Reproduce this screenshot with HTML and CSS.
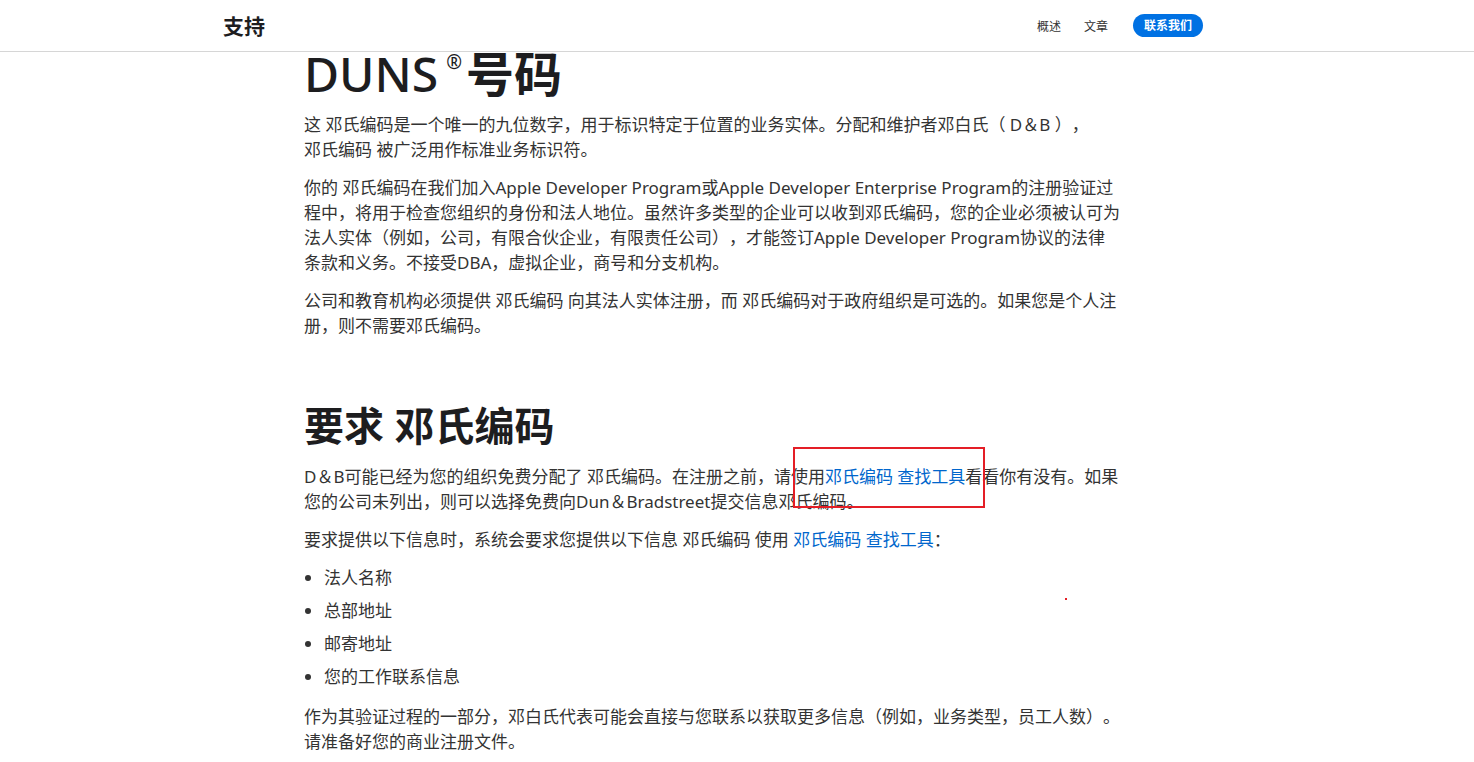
FILE: index.html
```html
<!DOCTYPE html>
<html lang="zh-CN">

<head>
    <meta charset="UTF-8">
    <meta name="viewport" content="width=device-width, initial-scale=1.0">
    <title>DUNS 号码 - 支持</title>
    <link rel="stylesheet" href="styles.css">
</head>

<body>
    <header class="topbar">
        <div class="topbar-inner">
            <h2 class="brand">支持</h2>
            <nav class="menu">
                <a href="#" class="menu-link">概述</a>
                <a href="#" class="menu-link">文章</a>
                <a href="#" class="contact-button">联系我们</a>
            </nav>
        </div>
    </header>

    <main class="page">
        <article class="content">
            <h1 class="title"><span class="title-latin">DUNS</span><sup class="reg">®</sup>号码</h1>
            <p>这 <span class="term">邓氏编码</span>是一个唯一的九位数字，用于标识特定于位置的业务实体。分配和维护者邓白氏（ D＆B ），<span class="term">邓氏编码</span> 被广泛用作标准业务标识符。</p>
            <p>你的 邓氏编码在我们加入Apple Developer Program或Apple Developer Enterprise Program的注册验证过程中，将用于检查您组织的身份和法人地位。虽然许多类型的企业可以收到邓氏编码，您的企业必须被认可为法人实体（例如，公司，有限合伙企业，有限责任公司），才能签订Apple Developer Program协议的法律条款和义务。不接受DBA，虚拟企业，商号和分支机构。</p>
            <p>公司和教育机构必须提供 <span class="term">邓氏编码</span> 向其法人实体注册，而 邓氏编码对于政府组织是可选的。如果您是个人注册，则不需要邓氏编码。</p>

            <h2 class="section-title">要求 邓氏编码</h2>
            <p>D＆B可能已经为您的组织免费分配了 邓氏编码。在注册之前，请<span class="marked">使用<a href="#" class="link">邓氏编码 查找工具</a>看</span>看你有没有。如果您的公司未列出，则可以选择免费向Dun＆Bradstreet提交信息邓氏编码。</p>
            <p>要求提供以下信息时，系统会要求您提供以下信息 邓氏编码 使用 <a href="#" class="link">邓氏编码 查找工具</a>：</p>
            <ul class="info-list">
                <li>法人名称</li>
                <li>总部地址</li>
                <li>邮寄地址</li>
                <li>您的工作联系信息</li>
            </ul>
            <p>作为其验证过程的一部分，邓白氏代表可能会直接与您联系以获取更多信息（例如，业务类型，员工人数）。请准备好您的商业注册文件。</p>
            <span class="dot"></span>
        </article>
    </main>
</body>

</html>
```

FILE: styles.css
```css
* {
    margin: 0;
    padding: 0;
    box-sizing: border-box;
}

body {
    font-family: "Noto Sans", "Noto Sans CJK SC", sans-serif;
    color: #333;
    background-color: #fff;
    text-spacing-trim: space-all;
}

.topbar {
    position: fixed;
    top: 0;
    left: 0;
    width: 100%;
    height: 52px;
    background-color: #fff;
    border-bottom: 1px solid #d6d6d6;
    z-index: 1000;
}

.topbar-inner {
    width: 980px;
    height: 51px;
    margin-left: 223px;
    display: flex;
    justify-content: space-between;
    align-items: center;
}

.brand {
    font-size: 21px;
    font-weight: 700;
    color: #1d1d1f;
    margin-top: -2px;
}

.menu {
    display: flex;
    align-items: center;
    gap: 23px;
}

.menu-link {
    font-size: 12px;
    color: #333;
    text-decoration: none;
}

.contact-button {
    font-size: 12px;
    font-weight: 700;
    color: #fff;
    background-color: #0071e3;
    text-decoration: none;
    padding: 3px 11px;
    border-radius: 12px;
    line-height: 17px;
    margin-left: 2px;
}

.page {
    padding-top: 48px;
}

.content {
    position: relative;
    width: 816px;
    margin-left: 304px;
}

.title {
    font-size: 48px;
    line-height: 52px;
    font-weight: 700;
    color: #1d1d1f;
    margin-bottom: 12px;
}

.title-latin {
    font-weight: 500;
}

.reg {
    font-size: 19px;
    font-weight: 500;
    vertical-align: top;
    line-height: 1;
    position: relative;
    top: 5px;
    margin-left: 8px;
    margin-right: 4px;
}

.section-title {
    font-size: 40px;
    line-height: 48px;
    font-weight: 700;
    color: #1d1d1f;
    margin-top: 64px;
    margin-bottom: 14px;
}

p {
    font-size: 17px;
    line-height: 25px;
    margin-bottom: 13px;
}

.term {
    white-space: nowrap;
}

.link {
    color: #0066cc;
    text-decoration: none;
}

.marked {
    position: relative;
}

.marked::after {
    content: "";
    position: absolute;
    left: 2px;
    top: -18px;
    width: 188px;
    height: 57px;
    border: 2px solid #e41e26;
    pointer-events: none;
}

.info-list {
    padding-left: 20px;
    margin-bottom: 15px;
}

.info-list li {
    font-size: 17px;
    line-height: 25px;
    margin-bottom: 8px;
}

.dot {
    position: absolute;
    left: 761px;
    top: 550px;
    width: 2px;
    height: 2px;
    background-color: #e41e26;
}
```
